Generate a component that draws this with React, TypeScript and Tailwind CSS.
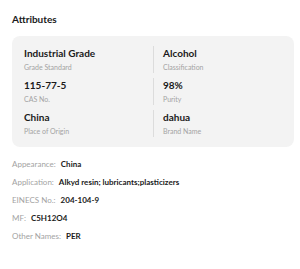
import React from "react";

const left = [
  { v: "Industrial Grade", l: "Grade Standard" },
  { v: "115-77-5", l: "CAS No." },
  { v: "China", l: "Place of Origin" },
];
const right = [
  { v: "Alcohol", l: "Classification" },
  { v: "98%", l: "Purity" },
  { v: "dahua", l: "Brand Name" },
];
const extra = [
  { l: "Appearance:", v: "China" },
  { l: "Application:", v: "Alkyd resin; lubricants;plasticizers" },
  { l: "EINECS No.:", v: "204-104-9" },
  { l: "MF:", v: "C5H12O4" },
  { l: "Other Names:", v: "PER" },
];

function Item({ v, l, line }: { v: string; l: string; line?: boolean }) {
  return (
    <div className={line ? "border-l border-[#dcdcdc] pl-[9px]" : ""}>
      <div className="text-[10px] leading-[14px] font-bold text-[#1a1a1a]">{v}</div>
      <div className="mt-[1px] text-[7px] leading-[12px] text-[#a3a3a3]">{l}</div>
    </div>
  );
}

export default function App() {
  return (
    <div className="w-[300px] h-[269px] bg-white px-[12px] pt-[12px]" style={{ fontFamily: "Lato, 'Noto Sans', sans-serif" }}>
      <div className="text-[10px] leading-[14px] font-bold text-[#1a1a1a]">Attributes</div>
      <div className="mt-[10px] w-[282px] rounded-[8px] bg-[#f3f3f3] px-[12px] pt-[10px] pb-[10px] grid grid-cols-2">
        <div className="flex flex-col gap-[5px]">
          {left.map((x) => (
            <Item key={x.l} {...x} />
          ))}
        </div>
        <div className="flex flex-col gap-[5px]">
          {right.map((x) => (
            <Item key={x.l} {...x} line />
          ))}
        </div>
      </div>
      <div className="mt-[11px] flex flex-col gap-[6px]">
        {extra.map((x) => (
          <div key={x.l} className="text-[8px] leading-[12px] flex gap-[5px]">
            <span className="text-[#a3a3a3]">{x.l}</span>
            <span className="font-bold text-[#1a1a1a]">{x.v}</span>
          </div>
        ))}
      </div>
    </div>
  );
}
